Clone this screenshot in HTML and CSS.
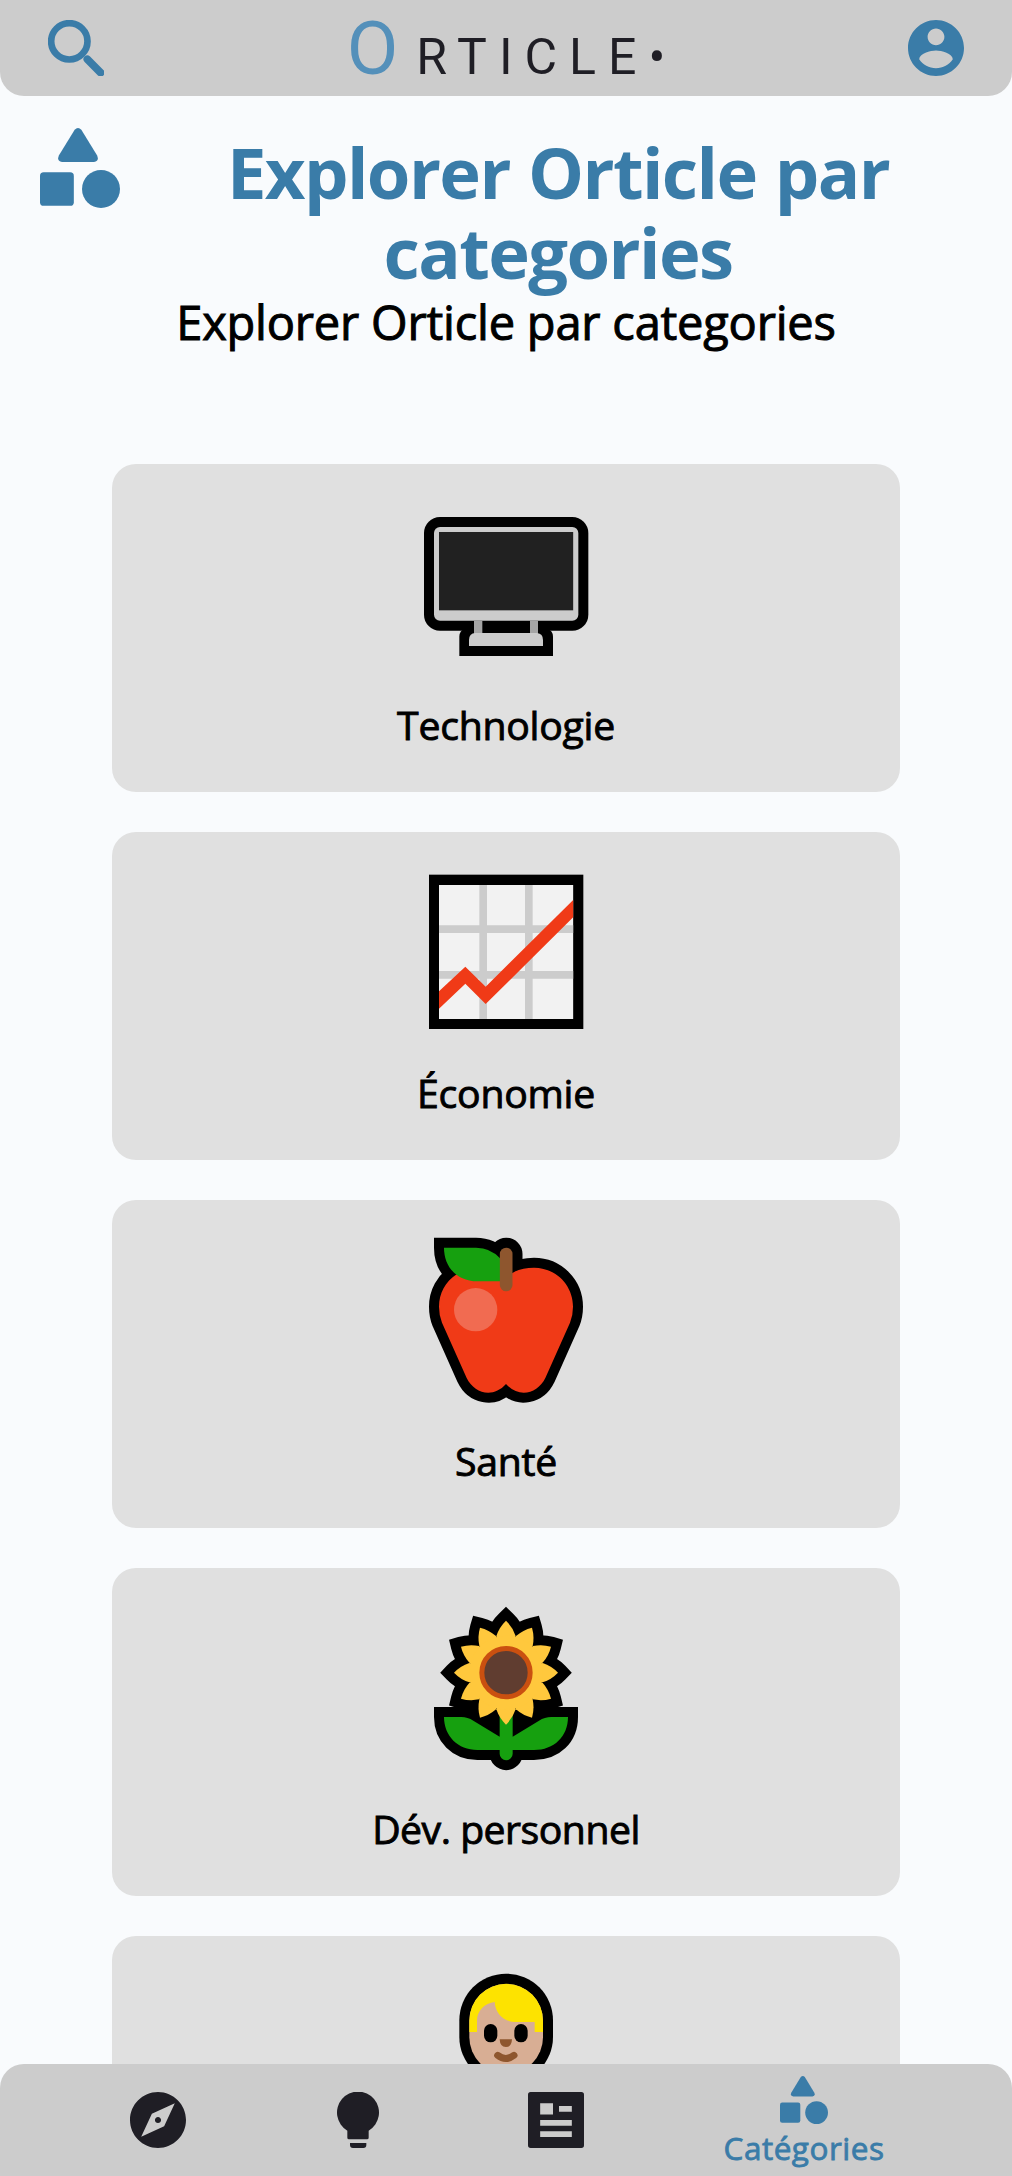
FILE: index.html
```html
<!DOCTYPE html>
<html lang="fr">
<head>
<meta charset="utf-8">
<title>Orticle</title>
<link rel="stylesheet" href="styles.css">
</head>
<body>
<svg class="defs" aria-hidden="true">
  <symbol id="shapes" viewBox="120 384 240 240">
    <path d="M224 389Q234 379 244 389L291 466Q299 483 282 486H186Q169 483 177 466Z"/>
    <rect x="120" y="517" width="101.500" height="100.500" rx="11"/>
    <circle cx="303" cy="567" r="57"/>
  </symbol>
</svg>

<header class="topbar">
  <svg class="icon blue" viewBox="144 60 168 168">
    <circle class="lens" cx="208" cy="124" r="54.500"/>
    <path class="handle" d="M262 178L302 218"/>
  </svg>
  <div class="logo"><span class="logo-o">O</span><span class="logo-rest">RTICLE•</span></div>
  <svg class="icon blue" viewBox="2 2 20 20"><path d="M12 2C6.480 2 2 6.480 2 12s4.480 10 10 10 10-4.480 10-10S17.520 2 12 2zm0 3c1.660 0 3 1.340 3 3s-1.340 3-3 3-3-1.340-3-3 1.340-3 3-3zm0 14.200c-2.500 0-4.710-1.280-6-3.220.030-1.990 4-3.080 6-3.080 1.990 0 5.970 1.090 6 3.080-1.290 1.940-3.500 3.220-6 3.220z"/></svg>
</header>

<main>
  <div class="heading">
    <svg class="heading-icon blue"><use href="#shapes"/></svg>
    <h1>Explorer Orticle par<br>categories</h1>
  </div>
  <p class="subtitle">Explorer Orticle par categories</p>

  <div class="cards">
    <a class="card">
      <svg class="emoji" viewBox="18 -78 600 600">
        <rect x="72" y="81" width="493" height="341" rx="48"/>
        <path d="M178 498V440Q178 422 196 415H440Q459 422 459 440V498Z"/>
        <rect x="102" y="111" width="433" height="281" rx="18" fill="#ccc"/>
        <rect x="117" y="126" width="402.500" height="235" fill="#212121"/>
        <path d="M222 392H247V432H222ZM390 392H414V432H390Z" fill="#a5a5a5"/>
        <path d="M207 468V450Q207 430 226 429H411Q429 431 429 450V468Z" fill="#ccc"/>
      </svg>
      <span class="label">Technologie</span>
    </a>
    <a class="card">
      <svg class="emoji" viewBox="18 -84 600 600">
        <rect x="87" y="44" width="463" height="463"/>
        <rect x="117" y="75" width="402.500" height="402" fill="#f2f2f2"/>
        <path d="M238 75H261V477H238ZM375 75H398V477H375ZM117 196H519.500V219H117ZM117 333H519.500V356H117Z" fill="#ccc"/>
        <path d="M117 394L196 320L257 380L519.500 120V172L257 432L196 371L117 446Z" fill="#f03a17"/>
      </svg>
      <span class="label">Économie</span>
    </a>
    <a class="card">
      <svg class="emoji" viewBox="18 -60 600 600">
        <defs>
          <path id="apple" d="M318 172C345 150 370 143 402 143C468 143 519 196 519 260Q519 286 510 308L436 474C414 520 357 536 318 492C279 536 222 520 200 474L126 308Q117 286 117 260C117 220 136 185 170 163Z"/>
          <path id="leaf" d="M132 83H228Q272 83 300 115V184H232C172 184 132 142 132 83Z"/>
          <rect id="stem" x="299.500" y="83" width="38" height="131" rx="19"/>
        </defs>
        <g class="outline"><use href="#apple"/><use href="#leaf"/><use href="#stem"/></g>
        <use href="#apple" fill="#f03a17"/>
        <use href="#leaf" fill="#16a00f"/>
        <use href="#stem" fill="#8e562e"/>
        <circle cx="227" cy="269" r="65" fill="#f16b51"/>
      </svg>
      <span class="label">Santé</span>
    </a>
    <a class="card">
      <svg class="emoji" viewBox="18 -66 600 600">
        <defs>
          <path id="petal" d="M318 248L289 138Q298 111 318 92Q338 111 347 138Z"/>
          <g id="petals">
            <use href="#petal"/><use href="#petal" transform="rotate(30 318 248)"/><use href="#petal" transform="rotate(60 318 248)"/>
            <use href="#petal" transform="rotate(90 318 248)"/><use href="#petal" transform="rotate(120 318 248)"/><use href="#petal" transform="rotate(150 318 248)"/>
            <use href="#petal" transform="rotate(180 318 248)"/><use href="#petal" transform="rotate(210 318 248)"/><use href="#petal" transform="rotate(240 318 248)"/>
            <use href="#petal" transform="rotate(270 318 248)"/><use href="#petal" transform="rotate(300 318 248)"/><use href="#petal" transform="rotate(330 318 248)"/>
          </g>
          <path id="leaves" d="M132 381H184Q203 381 220 392L299 440V370H338V440L417 392Q434 381 454 381H504C504 440 462 480 402 480H338V491A19.500 19.500 0 0 1 299 491V480H232C174 480 132 438 132 381Z"/>
        </defs>
        <g class="outline"><use href="#petals"/><use href="#leaves"/></g>
        <use href="#leaves" fill="#16a00f"/>
        <use href="#petals" fill="#ffc83d"/>
        <circle cx="318" cy="248" r="111" fill="#ffc83d"/>
        <circle cx="318" cy="248" r="72.500" fill="#603d30" stroke="#ca5010" stroke-width="15"/>
      </svg>
      <span class="label dev">Dév. personnel</span>
    </a>
    <a class="card">
      <svg class="emoji" viewBox="18 18 600 600">
        <rect x="178" y="131" width="281" height="330" rx="140"/>
        <rect x="208" y="162" width="221" height="270" rx="110" fill="#d8ae94"/>
        <path d="M208 306V272A110.500 110.500 0 0 1 429 272V306H404V276H346C312 276 286 250 284 216C254 219 231 242 231 272V306Z" fill="#fde300"/>
        <rect x="252" y="282" width="40" height="55" rx="20"/>
        <rect x="343" y="282" width="40" height="55" rx="20"/>
        <path d="M299 328H336Q335 351 317.500 351Q300 351 299 328Z" fill="#8e562e"/>
        <path d="M293 376Q317 395 342 376" fill="none" stroke="#8e562e" stroke-width="21" stroke-linecap="round"/>
      </svg>
    </a>
  </div>
</main>

<nav class="bottombar">
  <a class="tab"><svg class="icon dark" viewBox="2 2 20 20"><path d="M12 10.900c-.610 0-1.100.490-1.100 1.100s.490 1.100 1.100 1.100c.610 0 1.100-.490 1.100-1.100s-.490-1.100-1.100-1.100zM12 2C6.480 2 2 6.480 2 12s4.480 10 10 10 10-4.480 10-10S17.520 2 12 2zm2.190 12.190L6 18l3.810-8.190L18 6l-3.810 8.190z"/></svg></a>
  <a class="tab"><svg class="icon dark" viewBox="687 156 168 168"><path d="M742 272A63 63 0 1 1 806 272V293Q806 298 801 298H747Q742 298 742 293ZM750 309H799V315Q799 324 790 324H759Q750 324 750 315Z"/></svg></a>
  <a class="tab"><svg class="icon dark" viewBox="84 156 168 168"><path fill-rule="evenodd" d="M92 156H244Q252 156 252 164V316Q252 324 244 324H92Q84 324 84 316V164Q84 156 92 156ZM120.500 189.500H159V223.500H120.500ZM177 198H215.500V215.500H177ZM120.500 240H215.500V257.500H120.500ZM120.500 273.500H215.500V291H120.500Z"/></svg></a>
  <a class="tab active"><svg class="tab-shapes blue"><use href="#shapes"/></svg><span>Catégories</span></a>
</nav>
</body>
</html>
```
FILE: styles.css
```css
* { box-sizing: border-box; }
body {
  margin: 0;
  height: 2176px;
  overflow: hidden;
  display: flex;
  flex-direction: column;
  background: #f9fbfd;
  color: #000;
  font-family: "Open Sans", "Noto Sans", sans-serif;
}
svg { display: block; flex: none; }
.defs { position: absolute; width: 0; height: 0; }
.blue { fill: #3a7ca8; }
.dark { fill: #1f1e25; }
.icon { width: 56px; height: 56px; }

.topbar {
  flex: none;
  height: 96px;
  padding: 0 48px;
  display: flex;
  align-items: center;
  justify-content: space-between;
  background: #ccc;
  border-radius: 0 0 24px 24px;
}
.lens { fill: none; stroke: #3a7ca8; stroke-width: 20; }
.handle { stroke: #3a7ca8; stroke-width: 23; stroke-linecap: round; }
.logo {
  display: flex;
  align-items: baseline;
  gap: 18px;
  padding-top: 9px;
  font-family: Roboto, sans-serif;
  line-height: 96px;
  white-space: nowrap;
}
.logo-o { font-size: 75px; color: #5490ba; }
.logo-rest { font-size: 50px; letter-spacing: 12px; margin-right: -12px; color: #1f1e25; }

main { flex: 1; min-height: 0; padding-top: 32px; overflow: hidden; }
.heading { display: flex; gap: 24px; padding: 0 40px; }
.heading-icon { width: 80px; height: 80px; }
h1 {
  flex: 1;
  margin: 0;
  padding-top: 4px;
  height: 160px;
  color: #3a7ca8;
  font-size: 70.500px;
  line-height: 80px;
  font-weight: 700;
  text-align: center;
  letter-spacing: -1.600px;
  word-spacing: 1.500px;
}
.subtitle {
  margin: 0;
  height: 64px;
  padding-top: 2px;
  font-size: 47px;
  line-height: 64px;
  text-align: center;
  letter-spacing: -0.200px;
  -webkit-text-stroke: 1px #000;
}
.cards { margin: 112px 112px 0; display: flex; flex-direction: column; gap: 40px; }
.card {
  height: 328px;
  flex: none;
  background: #e0e0e0;
  border-radius: 24px;
  display: flex;
  flex-direction: column;
  align-items: center;
}
.emoji { width: 200px; height: 200px; overflow: visible; }
.outline { fill: #000; stroke: #000; stroke-width: 60; stroke-miterlimit: 6; }
.label {
  margin-top: 34px;
  font-size: 39.200px;
  line-height: 53px;
  letter-spacing: -0.250px;
  -webkit-text-stroke: 0.900px #000;
}
.label.dev { letter-spacing: -0.500px; }

.bottombar {
  flex: none;
  height: 112px;
  padding-left: 130px;
  display: flex;
  align-items: center;
  background: #ccc;
  border-radius: 24px 24px 0 0;
}
.tab { width: 56px; margin-right: 143px; }
.tab.active {
  width: 240px;
  margin: 0 0 0 -43px;
  height: 112px;
  padding-top: 12px;
  display: flex;
  flex-direction: column;
  align-items: center;
  color: #3a7ca8;
  font-size: 31.500px;
  line-height: 43px;
  letter-spacing: 0.500px;
  -webkit-text-stroke: 0.800px #3a7ca8;
}
.tab-shapes { width: 48px; height: 48px; }
.tab span { margin-top: 2px; }
```
